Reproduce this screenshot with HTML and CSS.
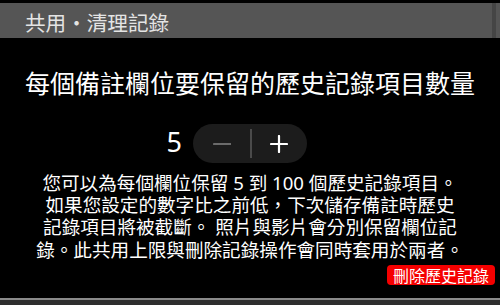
FILE: index.html
```html
<!DOCTYPE html>
<html lang="zh-Hant">
<head>
<meta charset="utf-8">
<link rel="stylesheet" href="styles.css">
</head>
<body>
<div class="app">
  <header class="topbar">共用・清理記錄</header>
  <main class="content">
    <h1 class="title">每個備註欄位要保留的歷史記錄項目數量</h1>
    <div class="stepper-row">
      <span class="value">5</span>
      <div class="stepper">
        <button class="step minus" aria-label="減少">
          <svg width="18" height="18" viewBox="0 0 18 18"><path d="M1 9H18" stroke="#6b6b6b" stroke-width="2.2" stroke-linecap="round"/></svg>
        </button>
        <span class="divider"></span>
        <button class="step plus" aria-label="增加">
          <svg width="18" height="18" viewBox="0 0 18 18"><path d="M1 9H17M9 1V17" stroke="#ffffff" stroke-width="2.2" stroke-linecap="round"/></svg>
        </button>
      </div>
      <span></span>
    </div>
    <p class="desc">您可以為每個欄位保留 5 到 100 個歷史記錄項目。<br> 如果您設定的數字比之前低，下次儲存備註時歷史<br>記錄項目將被截斷。 照片與影片會分別保留欄位記<br>錄。此共用上限與刪除記錄操作會同時套用於兩者。</p>
    <div class="actions">
      <button class="danger">刪除歷史記錄</button>
    </div>
  </main>
  <footer class="bottombar"></footer>
</div>
</body>
</html>
```
FILE: styles.css
```css
html, body {
  margin: 0;
  padding: 0;
  background: #000;
}
body {
  font-family: "Noto Sans CJK TC", "Noto Sans", sans-serif;
  color: #fff;
}
.app {
  width: 500px;
  height: 305px;
  display: flex;
  flex-direction: column;
  overflow: hidden;
}
.topbar {
  margin-top: 3px;
  height: 35px;
  box-sizing: border-box;
  padding: 7px 0 0 25px;
  background: linear-gradient(to right, #555 0, #555 492px, #454545 492px, #454545 496px, #555 496px);
  color: #e4e4e4;
  font-size: 20.6px;
  line-height: 24px;
}
.content {
  display: flex;
  flex-direction: column;
  align-items: stretch;
}
.title {
  margin: 29px 0 0;
  font-size: 25px;
  font-weight: 400;
  line-height: 30px;
  text-align: center;
  color: #fff;
}
.stepper-row {
  margin-top: 27px;
  display: grid;
  grid-template-columns: 1fr auto 1fr;
  align-items: center;
}
.value {
  justify-self: end;
  margin-right: 11px;
  font-family: "Noto Sans", sans-serif;
  font-size: 27px;
  line-height: 30px;
  margin-top: -4px;
}
.stepper {
  width: 114px;
  height: 39px;
  border-radius: 20px;
  background: #1c1c1c;
  display: flex;
  align-items: center;
}
.step {
  flex: 1;
  height: 100%;
  border: 0;
  padding: 0;
  background: transparent;
  display: flex;
  align-items: center;
  justify-content: center;
}
.minus {
  padding-left: 2px;
}
.plus {
  padding-right: 1px;
}
.divider {
  width: 2px;
  height: 29px;
  background: #4a4a4a;
}
.desc {
  margin: 9px 0 0;
  font-family: "Noto Sans", "Noto Sans CJK TC", sans-serif;
  font-size: 18.6px;
  line-height: 22.2px;
  text-align: center;
  color: #fff;
}
.actions {
  margin-top: 4px;
  display: flex;
  justify-content: flex-end;
  padding-right: 5px;
}
.danger {
  height: 20px;
  padding: 0 6px;
  border: 0;
  border-radius: 4px;
  background: #f50000;
  color: #fff;
  font-family: "Noto Sans CJK TC", sans-serif;
  font-size: 16px;
  line-height: 20px;
}
.bottombar {
  margin-top: auto;
  height: 7px;
  box-sizing: border-box;
  border-top: 2px solid #8a8a8a;
  background: #2e2e2e;
}
```
